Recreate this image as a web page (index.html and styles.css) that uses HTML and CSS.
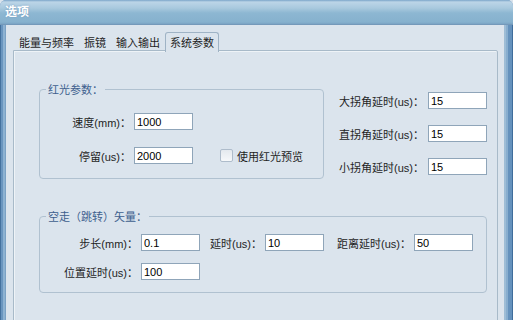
FILE: index.html
```html
<!DOCTYPE html>
<html>
<head>
    <title>选项</title>
    <meta charset="UTF-8">
    <link rel="stylesheet" href="styles.css">
</head>
<body>
    <div class="window">
        <div class="titlebar">选项</div>
        <div class="frame">
            <div class="client">
                <div class="tabs">
                    <div class="tab">能量与频率</div>
                    <div class="tab">振镜</div>
                    <div class="tab">输入输出</div>
                    <div class="tab active">系统参数</div>
                </div>
                <div class="panel">
                    <div class="top-row">
                        <fieldset class="group red-group">
                            <legend>红光参数：</legend>
                            <div class="red-grid">
                                <label class="field-label">速度(mm)：</label>
                                <input type="text" value="1000">
                                <span></span>
                                <label class="field-label">停留(us)：</label>
                                <input type="text" value="2000">
                                <label class="check"><input type="checkbox"> 使用红光预览</label>
                            </div>
                        </fieldset>
                        <div class="corner-grid">
                            <label class="field-label">大拐角延时(us)：</label>
                            <input type="text" value="15">
                            <label class="field-label">直拐角延时(us)：</label>
                            <input type="text" value="15">
                            <label class="field-label">小拐角延时(us)：</label>
                            <input type="text" value="15">
                        </div>
                    </div>
                    <fieldset class="group jump-group">
                        <legend>空走（跳转）矢量：</legend>
                        <div class="jump-grid">
                            <label class="field-label">步长(mm)：</label>
                            <input type="text" value="0.1">
                            <label class="field-label">延时(us)：</label>
                            <input type="text" value="10">
                            <label class="field-label">距离延时(us)：</label>
                            <input type="text" value="50">
                            <label class="field-label">位置延时(us)：</label>
                            <input type="text" value="100">
                        </div>
                    </fieldset>
                </div>
            </div>
        </div>
    </div>
</body>
</html>
```
FILE: styles.css
```css
html {
    font-family: "Liberation Sans", "Noto Sans CJK SC", sans-serif;
    font-size: 11px;
}
body {
    margin: 0;
    background: #dbe4ed;
}
.window {
    width: 513px;
    height: 320px;
    display: flex;
    flex-direction: column;
    overflow: hidden;
    border-radius: 6px 6px 0 0;
    background: #6c98c1;
}
.titlebar {
    height: 24px;
    line-height: 24px;
    padding-left: 5px;
    color: #fff;
    font-weight: bold;
    font-size: 12px;
    text-shadow: 0 0 2px #6f97bb;
    background: linear-gradient(#7ba5c9 0, #bcd5e7 2px, #a9c9de 8px, #8db7d2 13px, #86b1ce 22px, #7aa3c3 24px);
    border-bottom: 1px solid #7499ba;
}
.frame {
    flex: 1;
    display: flex;
    background:
        linear-gradient(to right, #44729f 0, #44729f 1px, #6995bf 1px, #6995bf 3px, #8db2d2 3px, #8db2d2 5px, #7aa1c4 5px, #7aa1c4 6px, transparent 6px),
        linear-gradient(to left, #3f6d9b 0, #3f6d9b 1px, #6592bd 1px, #6592bd 5px, #88aecf 5px, #88aecf 7px, #9ebdd6 7px, #9ebdd6 9px, transparent 9px),
        #6c98c1;
}
.client {
    flex: 1;
    margin: 0 9px 0 6px;
    padding: 7px 6px 0 7px;
    background: #dbe4ed;
    color: #1e1e1e;
}
.tabs {
    display: flex;
    height: 18px;
    margin-left: 1px;
    position: relative;
    z-index: 1;
}
.tab {
    padding: 0 5px;
    line-height: 20px;
    height: 18px;
    font-size: 11px;
    font-family: "Noto Sans CJK SC", sans-serif;
}
.tab.active {
    background: #dbe4ed;
    border: 1px solid #9fb3c5;
    border-bottom: none;
    border-radius: 3px 3px 0 0;
    padding: 0 4px;
    height: 19px;
    line-height: 18px;
}
.panel {
    height: 259px;
    border: 1px solid #a8bac9;
    border-radius: 0 2px 2px 2px;
    padding: 31px 0 0 25px;
    box-sizing: content-box;
    box-shadow: inset 1px 1px 0 #eef3f7;
}
.top-row {
    display: flex;
    align-items: flex-start;
}
.group {
    margin: 0;
    padding: 0;
    border: 1px solid #b0c1d0;
    border-radius: 4px;
}
.group legend {
    margin-left: 6px;
    padding: 0 2px;
    line-height: 14px;
    color: #3e5f8e;
    font-family: "Noto Sans CJK SC", sans-serif;
}
.red-group {
    width: 283px;
    height: 95px;
}
.field-label {
    justify-self: end;
    padding-right: 3px;
    white-space: nowrap;
    font-family: "Liberation Sans", "Noto Sans CJK SC", sans-serif;
}
input[type="text"] {
    width: 59px;
    height: 17px;
    box-sizing: border-box;
    padding: 0 2px;
    border: 1px solid #8fa5b9;
    background: #fff;
    font-family: "Liberation Sans", sans-serif;
    font-size: 11px;
    color: #000;
}
.red-grid {
    display: grid;
    grid-template-columns: 94px 59px auto;
    align-items: center;
    row-gap: 17px;
    margin-top: 17px;
}
.check {
    display: flex;
    align-items: center;
    gap: 4px;
    padding-left: 27px;
    font-family: "Noto Sans CJK SC", sans-serif;
}
.check input {
    appearance: none;
    margin: 0;
    width: 13px;
    height: 13px;
    border: 1px solid #aebccb;
    border-radius: 2px;
    background: linear-gradient(#e4e9ee, #f6f8fa);
}
.corner-grid {
    display: grid;
    grid-template-columns: 104px 59px;
    align-items: center;
    row-gap: 16px;
    margin-top: 10px;
}
.corner-grid .field-label {
    padding-right: 4px;
}
.jump-group {
    width: 446px;
    height: 82px;
    margin-top: 30px;
}
.jump-grid {
    display: grid;
    grid-template-columns: 101px 59px 65px 58px 91px 59px;
    align-items: center;
    row-gap: 12px;
    margin-top: 11px;
}
.jump-grid input[type="text"] {
    height: 17px;
}
```
